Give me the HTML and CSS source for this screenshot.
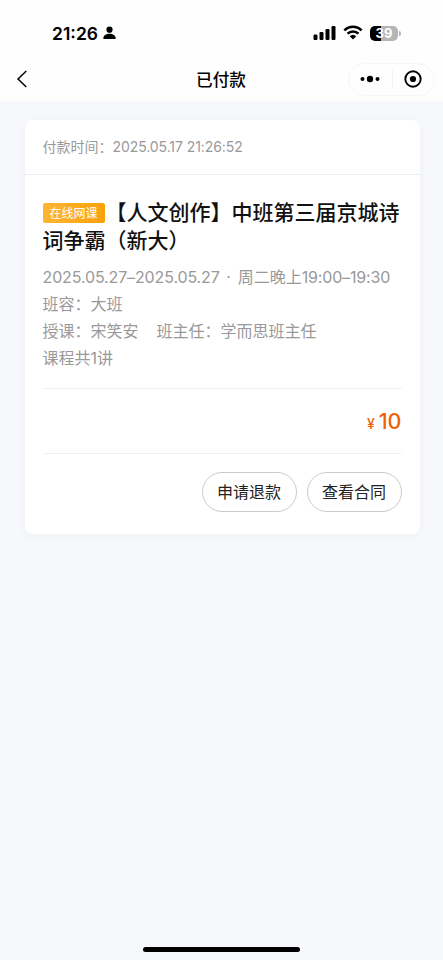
FILE: index.html
```html
<!DOCTYPE html>
<html lang="zh-CN">
<head>
<meta charset="utf-8">
<meta name="viewport" content="width=device-width">
<title>已付款</title>
<link rel="stylesheet" href="styles.css">
</head>
<body>
<div class="screen">
  <header class="top">
    <div class="status">
      <div class="clock"><span>21:26</span>
        <svg width="13" height="14" viewBox="0 0 13 14"><circle cx="6.5" cy="3.7" r="3.1"/><path d="M.4 13V11.800C.4 9.400 3 7.700 6.500 7.700s6.100 1.700 6.100 4.100V13z"/></svg>
      </div>
      <div class="signals">
        <svg width="24" height="16" viewBox="0 0 24 16"><rect x=".5" y="9.500" width="4" height="5.500" rx="1.200"/><rect x="6.500" y="7" width="4" height="8" rx="1.200"/><rect x="12.500" y="4" width="4" height="11" rx="1.200"/><rect x="18.500" y="1" width="4" height="14" rx="1.200"/></svg>
        <svg class="wifi" width="20" height="16" viewBox="0 0 20 16"><path d="M1.300 5.300a12.700 12.700 0 0 1 17.400 0M4.500 8.700a8 8 0 0 1 11 0" fill="none" stroke="#000" stroke-width="2.500"/><path d="M6.700 11.200a4.900 4.900 0 0 1 6.600 0L10 14.600z"/></svg>
        <div class="battery"><span>39</span></div>
        <i class="battery-tip"></i>
      </div>
    </div>
    <nav class="nav">
      <svg class="back" width="12" height="18" viewBox="0 0 12 18"><path d="M10.300 1 2 9l8.300 8" fill="none" stroke="#000" stroke-width="1.500"/></svg>
      <h1>已付款</h1>
      <div class="capsule">
        <svg width="20" height="8" viewBox="0 0 20 8"><circle cx="2.500" cy="4" r="2"/><circle cx="10" cy="4" r="3.200"/><circle cx="17.500" cy="4" r="2"/></svg>
        <i></i>
        <svg width="18" height="18" viewBox="0 0 18 18"><circle cx="9" cy="9" r="7.700" fill="none" stroke="#000" stroke-width="1.900"/><circle cx="9" cy="9" r="3.100"/></svg>
      </div>
    </nav>
  </header>
  <main class="card">
    <div class="paid">付款时间：<span class="stamp">2025.05.17 21:26:52</span></div>
    <section class="body">
      <h2><span class="tag">在线网课</span><span>【人文创作】中班第三届京城诗</span><br><span>词争霸（新大）</span></h2>
      <div class="details">
        <p><span class="dates">2025.05.27–2025.05.27</span><span class="dot">·</span>周二晚上<span class="hours">19:00–19:30</span></p>
        <p>班容：大班</p>
        <p><span class="teacher">授课：宋笑安</span>班主任：学而思班主任</p>
        <p>课程共1讲</p>
      </div>
      <div class="price"><span class="yen">¥</span><span>10</span></div>
      <div class="actions"><button>申请退款</button><button>查看合同</button></div>
    </section>
  </main>
  <div class="home"></div>
</div>
</body>
</html>
```
FILE: styles.css
```css
* { box-sizing: border-box; }
body { margin: 0; font-family: Inter, "Noto Sans CJK SC", sans-serif; background: #f7f8fb; }
h1, h2, p { margin: 0; }
svg { display: block; flex: none; }
.screen { height: 960px; display: flex; flex-direction: column; align-items: center; overflow: hidden; }
.top { width: 100%; height: 101px; background: #fefefe; padding-top: 21px; flex: none; }
.status { height: 24px; display: flex; justify-content: space-between; padding: 0 42px 0 52px; }
.clock { display: flex; align-items: center; gap: 5px; font-size: 17.500px; font-weight: 600; }
.signals { display: flex; align-items: center; }
.wifi { margin: 0 7px 0 6px; }
.battery { width: 28px; height: 15px; border-radius: 5px; background: linear-gradient(90deg, #000 39%, #b5b5b5 39%); color: #fff; font-size: 13px; font-weight: 700; line-height: 15px; text-align: center; }
.battery-tip { width: 2px; height: 5px; margin-left: 1px; border-radius: 0 2px 2px 0; background: #b5b5b5; }
.nav { height: 56px; display: grid; grid-template-columns: 1fr auto 1fr; align-items: center; padding: 12px 8px 0; }
.back { margin-left: 8px; }
.nav h1 { font-size: 16.600px; font-weight: 500; line-height: 24px; position: relative; left: -.5px; top: 1px; }
.capsule { justify-self: end; width: 87px; height: 33px; border: 1px solid #f6f6f6; border-radius: 17px; display: flex; align-items: center; padding: 0 12px 0 11px; justify-content: space-between; }
.capsule i { width: 1px; height: 20px; background: #f4f4f4; }
.card { width: 395px; height: 414px; margin: 19px 0 0 1px; background: #fff; border-radius: 8px; box-shadow: 0 2px 12px rgba(40, 50, 80, .035); flex: none; }
.paid { height: 55px; padding-left: 18px; border-bottom: 1px solid #e9edef; color: #999; font-size: 14px; line-height: 54px; }
.stamp { letter-spacing: -.08px; }
.body { padding: 22px 18px 0; }
h2 { height: 57px; font-size: 21px; line-height: 28px; font-weight: 500; color: #111; font-family: "Noto Sans CJK SC", sans-serif; white-space: nowrap; text-spacing-trim: space-all; }
.tag { display: inline-block; width: 62px; height: 20px; margin-right: 1px; border-radius: 2px; background: linear-gradient(90deg, #ffb532, #f9a20b); color: #fff; font-size: 12px; line-height: 19px; font-weight: 400; text-align: center; vertical-align: 2px; }
.details { margin-top: 10px; padding-bottom: 16px; border-bottom: 1px solid #f1f1f1; color: #999; font-size: 16px; }
.details p { height: 27px; line-height: 27px; white-space: nowrap; }
.dates { letter-spacing: -.13px; }
.hours { letter-spacing: -.15px; }
.dot { display: inline-block; width: 18px; text-align: center; }
.teacher { margin-right: 18px; }
.price { height: 65px; display: flex; justify-content: flex-end; align-items: baseline; gap: 4px; border-bottom: 1px solid #f1f1f1; color: #ed6206; font-size: 21.500px; font-weight: 500; line-height: 64px; }
.yen { font-size: 14px; }
.actions { display: flex; justify-content: flex-end; gap: 10px; padding-top: 18px; }
button { width: 95px; height: 40px; padding: 0; border: 1px solid #ccc; border-radius: 20px; background: #fff; color: #222; font: 400 16px/38px Inter, "Noto Sans CJK SC", sans-serif; }
.home { width: 157px; height: 5px; margin-top: auto; margin-bottom: 8px; border-radius: 3px; background: #000; flex: none; }
```
